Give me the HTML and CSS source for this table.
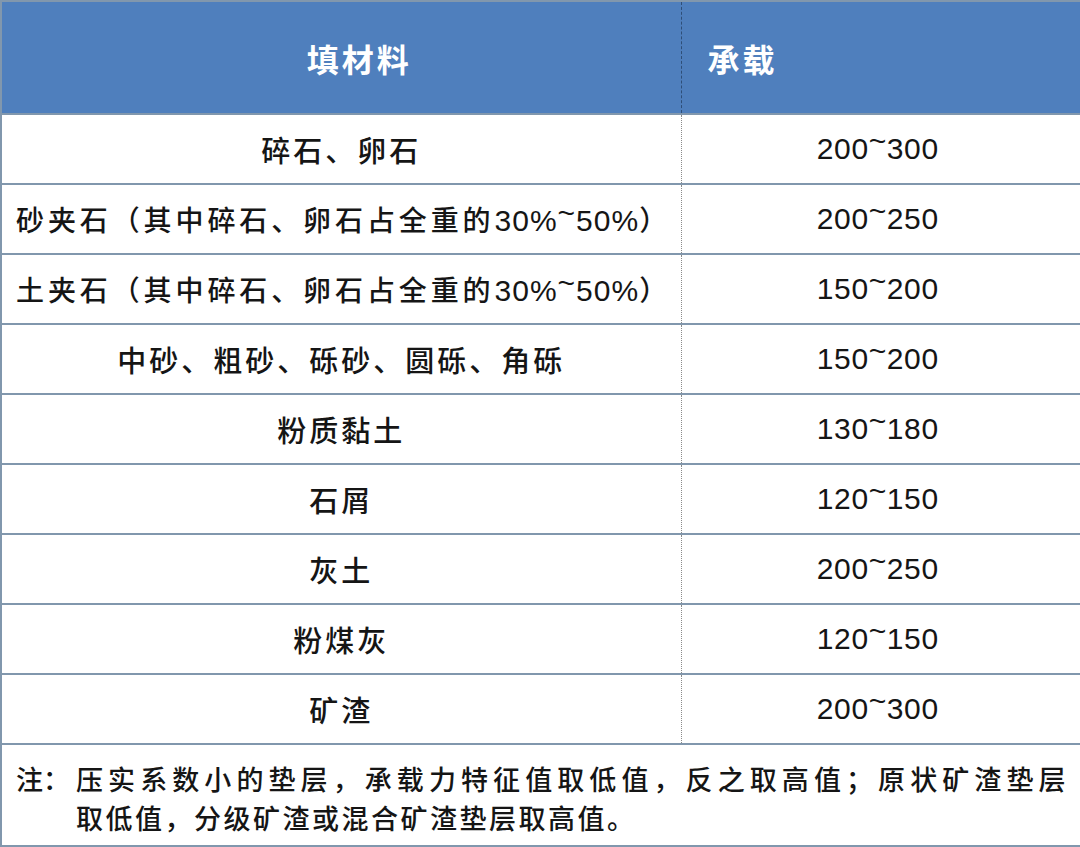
FILE: index.html
```html
<!DOCTYPE html>
<html lang="zh-CN">
<head>
<meta charset="utf-8">
<title>垫层承载力</title>
<link rel="stylesheet" href="styles.css">
</head>
<body>
<table class="grid">
  <colgroup><col class="col-a"><col class="col-b"></colgroup>
  <thead>
    <tr>
      <th class="h-mat">填材料</th>
      <th class="h-val">承载</th>
    </tr>
  </thead>
  <tbody>
    <tr><td class="mat">碎石、卵石</td><td class="val">200<span class="t">~</span>300</td></tr>
    <tr><td class="mat left">砂夹石（其中碎石、卵石占全重的<span class="num">30%<span class="t">~</span>50%</span>）</td><td class="val">200<span class="t">~</span>250</td></tr>
    <tr><td class="mat left">土夹石（其中碎石、卵石占全重的<span class="num">30%<span class="t">~</span>50%</span>）</td><td class="val">150<span class="t">~</span>200</td></tr>
    <tr><td class="mat">中砂、粗砂、砾砂、圆砾、角砾</td><td class="val">150<span class="t">~</span>200</td></tr>
    <tr><td class="mat">粉质黏土</td><td class="val">130<span class="t">~</span>180</td></tr>
    <tr><td class="mat">石屑</td><td class="val">120<span class="t">~</span>150</td></tr>
    <tr><td class="mat">灰土</td><td class="val">200<span class="t">~</span>250</td></tr>
    <tr><td class="mat">粉煤灰</td><td class="val">120<span class="t">~</span>150</td></tr>
    <tr><td class="mat">矿渣</td><td class="val">200<span class="t">~</span>300</td></tr>
    <tr class="note-row">
      <td colspan="2" class="note">
        <div class="note-body">
          <span class="note-lbl">注：</span>
          <div class="note-txt">
            <span class="note-line first">压实系数小的垫层，承载力特征值取低值，反之取高值；原状矿渣垫层</span>
            <span class="note-line">取低值，分级矿渣或混合矿渣垫层取高值。</span>
          </div>
        </div>
      </td>
    </tr>
  </tbody>
</table>
</body>
</html>
```

FILE: styles.css
```css
html, body {
  margin: 0;
  padding: 0;
  background: #ffffff;
}

.grid {
  width: 1080px;
  border-collapse: collapse;
  table-layout: fixed;
  font-family: "Liberation Sans", "Noto Sans CJK SC", sans-serif;
  color: #151515;
  border: 2px solid #8197ad;
}

.col-a { width: 680px; }
.col-b { width: 400px; }

.grid th {
  background: #4f7fbd;
  color: #ffffff;
  height: 111px;
  padding: 0;
  font-family: "Noto Sans CJK SC", sans-serif;
  font-size: 32px;
  font-weight: 700;
  letter-spacing: 3px;
  border-bottom: 2px solid #8197ad;
}

.grid th.h-mat {
  text-align: center;
  padding-left: 36px;
  border-right: 1px dashed #2e4e78;
}

.grid th.h-val {
  text-align: left;
  padding-left: 26px;
}

.grid td {
  height: 68px;
  padding: 0;
  border-bottom: 2px solid #8197ad;
  vertical-align: middle;
}

.grid td.mat {
  text-align: center;
  font-size: 29px;
  font-weight: 500;
  letter-spacing: 3px;
  white-space: nowrap;
  border-right: 1px dotted #8a8a8a;
}

.grid td.mat.left {
  text-align: left;
  padding-left: 14px;
  font-size: 28px;
  letter-spacing: 3.9px;
}

.num {
  font-size: 30px;
  font-weight: 400;
  letter-spacing: 1px;
}

.grid td.val {
  text-align: center;
  font-size: 30px;
  letter-spacing: 0.6px;
  padding-right: 6px;
}

.t {
  position: relative;
  top: -8px;
}

.grid td.note {
  height: auto;
  padding: 14px 12px 8px 14px;
  font-size: 27px;
  font-weight: 500;
  font-family: "Noto Sans CJK SC", sans-serif;
  letter-spacing: 2.5px;
  line-height: 39px;
}

.note-body {
  display: flex;
}

.note-lbl {
  flex: none;
  width: 60px;
  letter-spacing: 0;
}

.note-txt {
  flex: 1;
  display: flex;
  flex-direction: column;
}

.note-line {
  display: block;
  white-space: nowrap;
}

.note-line.first {
  text-align: justify;
  text-align-last: justify;
  white-space: normal;
}
```
